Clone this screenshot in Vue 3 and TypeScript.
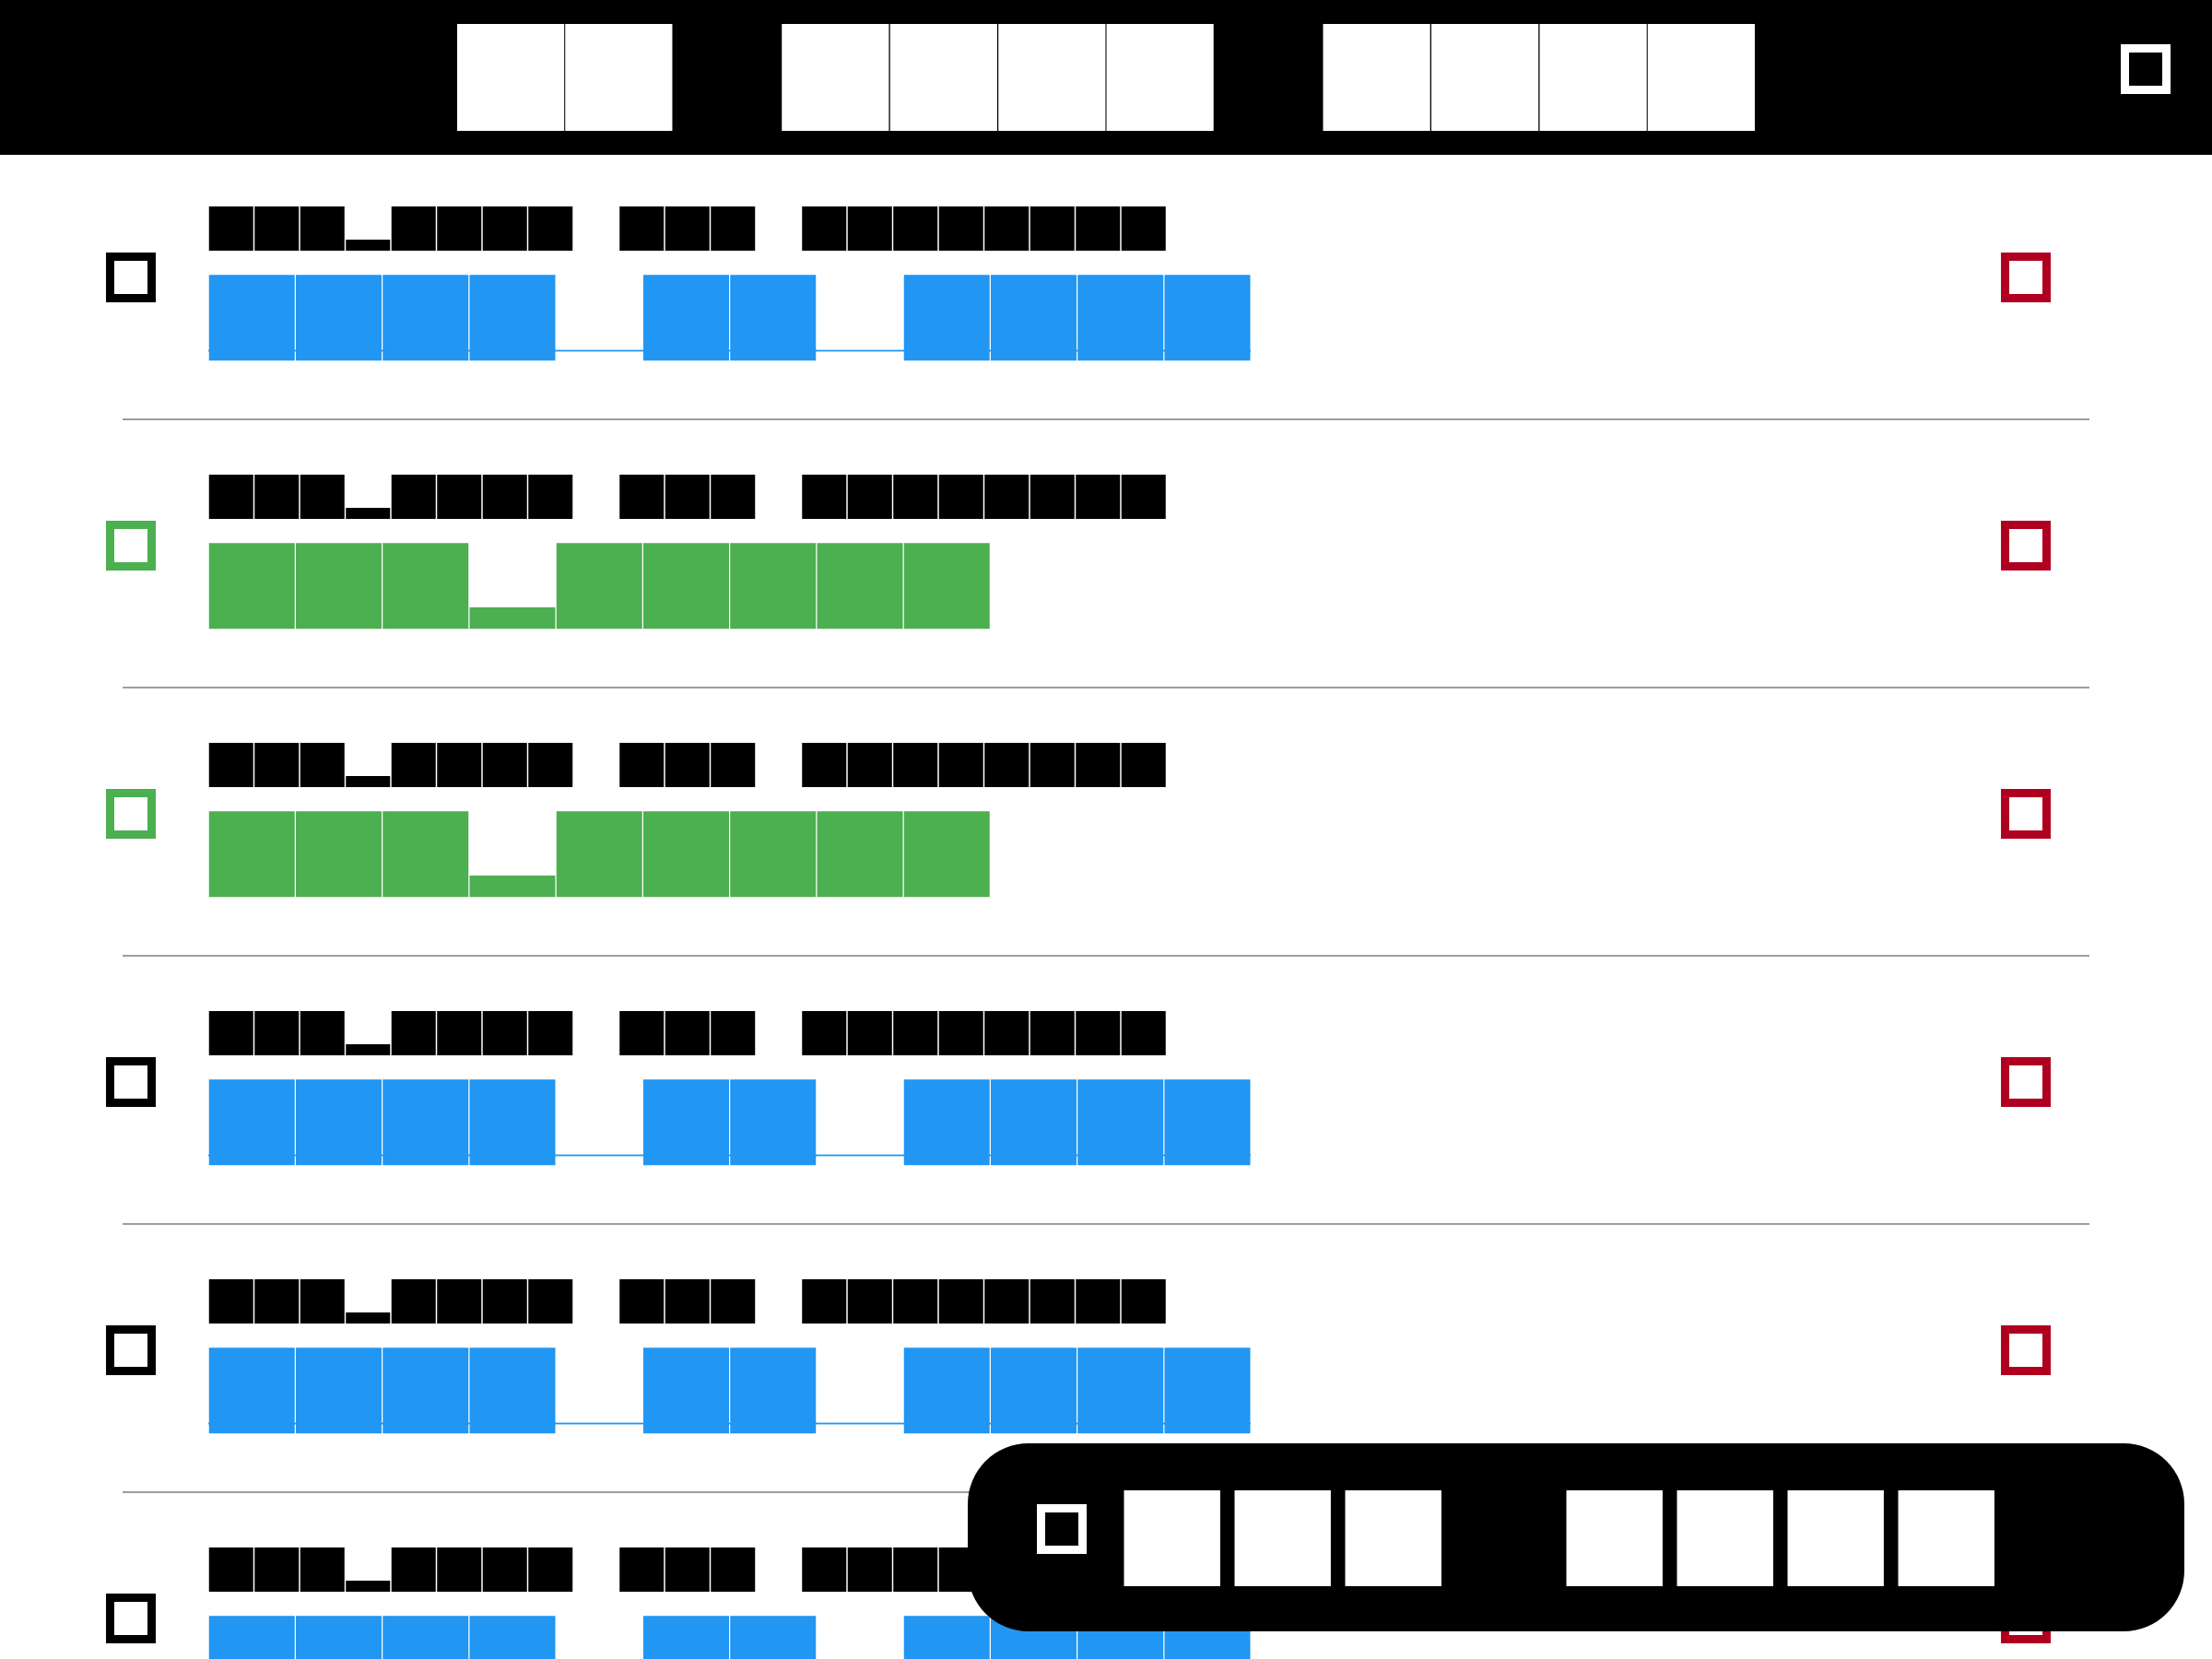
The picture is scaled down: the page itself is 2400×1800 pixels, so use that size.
<script setup lang="ts">
import { h, type FunctionalComponent } from 'vue'

// Metrics of one block face: size of a block, distance between blocks, inset of the first.
interface Face {
  size: number
  pitch: number
  inset: number
  height: number
  top: number
  low: number
}

const faces: Record<string, Face> = {
  title: { size: 116.2, pitch: 117.45, inset: 1, height: 116, top: 0, low: 29 },
  body: { size: 48, pitch: 49.5, inset: 0.75, height: 48, top: 0, low: 12 },
  status: { size: 93, pitch: 94.25, inset: 0.75, height: 94, top: 0.25, low: 23.3 },
  action: { size: 104.4, pitch: 120, inset: 0.5, height: 104, top: 0, low: 26 },
}

// x is a full block, _ is a low block, a space is left empty.
const BlockText: FunctionalComponent<{ pattern: string; face: string; underline?: boolean }> = (props) => {
  const face = faces[props.face]
  const width = Math.ceil(props.pattern.length * face.pitch)
  const full = props.face === 'status' ? 93 : face.height
  const shapes = [...props.pattern].flatMap((mark, i) => {
    if (mark === ' ') return []
    const tall = mark === 'x' ? full : face.low
    return [
      h('rect', {
        x: Math.floor((face.inset + i * face.pitch) * 4) / 4,
        y: face.top + full - tall,
        width: face.size,
        height: tall,
      }),
    ]
  })
  if (props.underline) {
    shapes.push(h('rect', { x: 0, y: 81.6, width, height: 1.8 }))
  }
  return h(
    'svg',
    { width, height: face.height, viewBox: `0 0 ${width} ${face.height}`, fill: 'currentColor', 'aria-hidden': 'true' },
    shapes,
  )
}
BlockText.props = {
  pattern: { type: String, required: true },
  face: { type: String, required: true },
  underline: Boolean,
}

const BoxIcon: FunctionalComponent = () =>
  h('svg', { width: 54, height: 54, viewBox: '0 0 54 54', fill: 'none', 'aria-hidden': 'true' }, [
    h('rect', { x: 4.5, y: 4.5, width: 45, height: 45, stroke: 'currentColor', 'stroke-width': 9 }),
  ])

const name = 'xxx_xxxx xxx xxxxxxxx'
const entries = [false, true, true, false, false, false].map((done, id) => ({ id, done }))
</script>

<template>
  <div class="screen">
    <header class="bar">
      <h1 class="bar-title"><BlockText pattern="xx xxxx xxxx" face="title" /></h1>
      <button class="icon-button bar-action" type="button" aria-label="Menu"><BoxIcon /></button>
    </header>

    <main class="content">
      <ul class="list">
        <li v-for="entry in entries" :key="entry.id" class="item">
          <div class="row">
            <span class="lead" :class="{ done: entry.done }"><BoxIcon /></span>
            <div class="texts">
              <BlockText :pattern="name" face="body" />
              <span v-if="entry.done" class="status done">
                <BlockText pattern="xxx_xxxxx" face="status" />
              </span>
              <a v-else class="status link" href="#" aria-label="Open">
                <BlockText pattern="xxxx xx xxxx" face="status" underline />
              </a>
            </div>
            <button class="icon-button remove" type="button" aria-label="Remove"><BoxIcon /></button>
          </div>
          <hr class="divider" />
        </li>
      </ul>
    </main>

    <button class="fab" type="button" aria-label="Add">
      <span class="fab-icon"><BoxIcon /></span>
      <BlockText pattern="xxx xxxx" face="action" />
    </button>
  </div>
</template>

<style>
body {
  margin: 0;
  background: #ffffff;
}
</style>

<style scoped>
.screen {
  display: flex;
  flex-direction: column;
  height: 100vh;
  overflow: hidden;
  color: #000000;
  font-family: Roboto, sans-serif;
}

.screen :deep(svg) {
  display: block;
  flex: none;
}

.bar {
  display: grid;
  grid-template-columns: 1fr auto 1fr;
  align-items: start;
  flex: none;
  padding: 26px 45px;
  background: #000000;
  color: #ffffff;
}

.bar-title {
  grid-column: 2;
  margin: 0;
}

.icon-button {
  flex: none;
  padding: 0;
  border: 0;
  background: none;
  color: inherit;
  cursor: pointer;
}

.bar-action {
  justify-self: end;
  margin-top: 22px;
}

.content {
  flex: 1;
  min-height: 0;
  overflow-y: auto;
  scrollbar-width: none;
}

.list {
  margin: 0;
  padding: 0;
  list-style: none;
}

.item {
  margin-bottom: 3px;
}

.row {
  display: flex;
  align-items: flex-start;
  padding: 56px 175px 62px 115px;
}

.lead {
  flex: none;
  margin: 50px 57px 0 0;
}

.texts {
  display: flex;
  flex: 1;
  flex-direction: column;
  align-items: flex-start;
  gap: 26px;
  min-width: 0;
}

.status {
  display: block;
}

.done {
  color: #4caf50;
}

.link {
  color: #2196f3;
}

.remove {
  margin-top: 50px;
  color: #b00020;
}

.divider {
  height: 2px;
  margin: 0 133px;
  border: 0;
  background: #9e9e9e;
}

.fab {
  position: fixed;
  right: 30px;
  bottom: 30px;
  display: flex;
  align-items: flex-start;
  gap: 40px;
  padding: 51px 191px 49px 75px;
  border: 0;
  border-radius: 66px;
  background: #000000;
  color: #ffffff;
  cursor: pointer;
}

.fab-icon {
  margin-top: 15px;
}
</style>
